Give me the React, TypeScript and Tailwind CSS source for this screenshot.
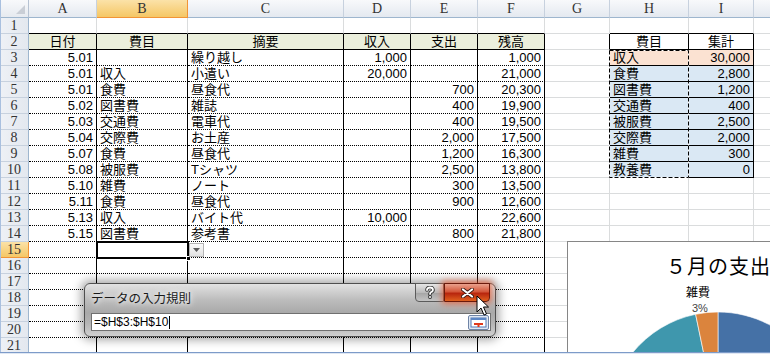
import React from "react";

const COLS = ["A", "B", "C", "D", "E", "F", "G", "H", "I", ""];

const DATA: Record<number, string[]> = {
  2: ["日付", "費目", "摘要", "収入", "支出", "残高", "", "費目", "集計"],
  3: ["5.01", "", "繰り越し", "1,000", "", "1,000", "", "収入", "30,000"],
  4: ["5.01", "収入", "小遣い", "20,000", "", "21,000", "", "食費", "2,800"],
  5: ["5.01", "食費", "昼食代", "", "700", "20,300", "", "図書費", "1,200"],
  6: ["5.02", "図書費", "雑誌", "", "400", "19,900", "", "交通費", "400"],
  7: ["5.03", "交通費", "電車代", "", "400", "19,500", "", "被服費", "2,500"],
  8: ["5.04", "交際費", "お土産", "", "2,000", "17,500", "", "交際費", "2,000"],
  9: ["5.07", "食費", "昼食代", "", "1,200", "16,300", "", "雑費", "300"],
  10: ["5.08", "被服費", "Tシャツ", "", "2,500", "13,800", "", "教養費", "0"],
  11: ["5.10", "雑費", "ノート", "", "300", "13,500"],
  12: ["5.11", "食費", "昼食代", "", "900", "12,600"],
  13: ["5.13", "収入", "バイト代", "10,000", "", "22,600"],
  14: ["5.15", "図書費", "参考書", "", "800", "21,800"],
};

function cellClass(r: number, c: number): string {
  const parts: string[] = [
    "flex items-end px-[3px] overflow-hidden whitespace-nowrap border-r border-b leading-[15px]",
  ];
  const blackRight =
    (c <= 5 && r >= 2) || (c >= 6 && c <= 8 && r >= 2 && r <= 10);
  parts.push(blackRight ? "border-r-black" : "border-r-[#dadcdd]");
  if (c <= 5 && (r === 1 || r === 2)) parts.push("border-b-black");
  else if (c <= 5 && r >= 3) parts.push("border-b-black [border-bottom-style:dotted]");
  else if ((c === 7 || c === 8) && r >= 1 && r <= 10) parts.push("border-b-black");
  else parts.push("border-b-[#dadcdd]");

  if (r === 2 && c <= 5) parts.push("bg-[#ebefdc]");
  else if (r === 3 && (c === 7 || c === 8)) parts.push("bg-[#fbe2d2]");
  else if (r >= 4 && r <= 10 && (c === 7 || c === 8)) parts.push("bg-[#dae8f4]");
  else parts.push("bg-white");

  if (r === 2) parts.push("justify-center");
  else if (c === 0 || c === 3 || c === 4 || c === 5 || c === 8) parts.push("justify-end");
  return parts.join(" ");
}

function Pie() {
  const cx = 150;
  const cy = 180;
  const r = 110;
  const vals = [2800, 1200, 400, 2500, 2000, 300];
  const colors = ["#4571a6", "#aa4643", "#89a54e", "#71588f", "#3f97ad", "#db843d"];
  const total = vals.reduce((a, b) => a + b, 0);
  let acc = 0;
  const pt = (deg: number) => {
    const rad = (deg * Math.PI) / 180;
    return [cx + r * Math.sin(rad), cy - r * Math.cos(rad)];
  };
  return (
    <svg className="absolute left-0 top-0" width="260" height="150">
      {vals.map((v, i) => {
        const a0 = (acc / total) * 360;
        acc += v;
        const a1 = (acc / total) * 360;
        const [x0, y0] = pt(a0);
        const [x1, y1] = pt(a1);
        const large = a1 - a0 > 180 ? 1 : 0;
        return (
          <path
            key={i}
            d={`M${cx},${cy} L${x0},${y0} A${r},${r} 0 ${large} 1 ${x1},${y1} Z`}
            fill={colors[i]}
            stroke="#ffffff"
            strokeWidth={0.6}
          />
        );
      })}
    </svg>
  );
}

const HEAD =
  "flex items-center justify-center border-r border-b font-['Liberation_Serif',serif] text-[14px] text-[#333]";

export default function App() {
  const rows = Array.from({ length: 21 }, (_, i) => i + 1);
  return (
    <div className="relative w-[770px] h-[354px] overflow-hidden bg-white font-['Liberation_Sans','Noto_Sans_CJK_JP',sans-serif] text-[13px] text-black">
      <div className="grid grid-cols-[29px_68px_91px_156px_67px_67px_67px_65px_79px_65px_60px] grid-rows-[18px_repeat(21,16px)] w-[814px]">
        <div className="flex items-end justify-end p-[3px] border-r border-b border-r-[#b6c2d2] border-b-[#9eb6ce] bg-[linear-gradient(180deg,#f8f9fb,#e6eaf0)]">
          <svg width="9" height="9" viewBox="0 0 9 9">
            <path d="M9,0 L9,9 L0,9 Z" fill="#c9ced6" />
          </svg>
        </div>
        {COLS.map((l, i) => (
          <div
            key={i}
            className={
              i === 1
                ? `${HEAD} border-r-[#f29436] border-b-[#f29436] bg-[linear-gradient(180deg,#fbe2a8,#f5c765)]`
                : `${HEAD} border-r-[#c7d1de] border-b-[#9eb6ce] bg-[linear-gradient(180deg,#f8f9fb,#e4e9f0)]`
            }
          >
            {l}
          </div>
        ))}
        {rows.map((r) => (
          <React.Fragment key={r}>
            <div
              className={
                r === 15
                  ? `${HEAD} border-r-[#f29436] border-b-[#f29436] bg-[linear-gradient(180deg,#fbe2a8,#f5c765)]`
                  : `${HEAD} border-r-[#9eb6ce] border-b-[#c7d1de] bg-[linear-gradient(90deg,#eef1f6,#e3e8ef)]`
              }
            >
              {r}
            </div>
            {COLS.map((_, c) => (
              <div key={c} className={cellClass(r, c)}>
                {DATA[r]?.[c] ?? ""}
              </div>
            ))}
          </React.Fragment>
        ))}
      </div>

      {/* copy marquee around H3:H10 */}
      <svg className="absolute left-0 top-0 pointer-events-none" width="770" height="354">
        <rect x="609.5" y="50.5" width="79" height="127" fill="none" stroke="#ffffff" strokeWidth="1" />
        <rect x="609.5" y="50.5" width="79" height="127" fill="none" stroke="#000000" strokeWidth="1" strokeDasharray="4 2" />
      </svg>

      {/* active cell B15 with fill handle and validation dropdown */}
      <div className="absolute left-[96px] top-[241px] w-[93px] h-[18px] border-2 border-black" />
      <div className="absolute left-[186px] top-[256px] w-[5px] h-[5px] bg-black border border-white" />
      <div className="absolute left-[189px] top-[243px] w-[15px] h-[14px] border border-[#b5b5b5] bg-[linear-gradient(180deg,#fafafa,#e2e2e2)] flex items-center justify-center">
        <svg width="7" height="4" viewBox="0 0 7 4">
          <path d="M0,0 L7,0 L3.5,4 Z" fill="#5a5a5a" />
        </svg>
      </div>

      {/* chart object */}
      <div className="absolute left-[567px] top-[241px] w-[260px] h-[150px] border border-[#868686] bg-white">
        <Pie />
        <div className="relative flex flex-col items-start">
          <div className="pl-[98px] pt-[9px] text-[20px] leading-[30px] tracking-[1px] font-['Noto_Sans_CJK_JP',sans-serif] text-black whitespace-nowrap">
            ５月の支出
          </div>
          <div className="pl-[118px] pt-[3px] text-[12px] leading-[16px] font-['Noto_Sans_CJK_JP',sans-serif]">
            雑費
          </div>
          <div className="pl-[124px] pt-[1px] text-[11px] leading-[14px] text-[#444]">3%</div>
        </div>
      </div>

      {/* dialog window */}
      <div className="absolute left-[84px] top-[283px] w-[412px] h-[54px] rounded-[6px] border border-[#4f4f4f] shadow-[0_0_10px_3px_rgba(0,0,0,0.35)] bg-[linear-gradient(180deg,#e2e2e2_0%,#bdbdbd_30%,#a9a9a9_55%,#b4b4b4_75%,#cfcfcf_100%)] flex flex-col px-[5px]">
        <div className="flex items-start justify-between h-[29px]">
          <div className="pt-[5px] pl-[1px] text-[12.5px] leading-[18px] text-[#1a1a1a] font-['Noto_Sans_CJK_JP',sans-serif] [text-shadow:0_0_5px_#ffffff,0_0_8px_#ffffff]">
            データの入力規則
          </div>
          <div className="flex mt-[-1px]">
            <div className="w-[29px] h-[19px] border border-[#5b5b5b] rounded-bl-[4px] bg-[linear-gradient(180deg,#e6e6e6,#bababa_50%,#a4a4a4_51%,#c4c4c4)] flex items-center justify-center">
              <svg width="10" height="13" viewBox="0 0 10 13">
                <path d="M2,4 Q2,1.5 5,1.5 Q8,1.5 8,4 Q8,5.5 5.5,6.5 L5,8" fill="none" stroke="#333" strokeWidth="3.6" strokeLinecap="round" />
                <circle cx="5" cy="11" r="1.9" fill="#333" />
                <path d="M2,4 Q2,1.5 5,1.5 Q8,1.5 8,4 Q8,5.5 5.5,6.5 L5,8" fill="none" stroke="#ffffff" strokeWidth="1.8" strokeLinecap="round" />
                <circle cx="5" cy="11" r="1" fill="#ffffff" />
              </svg>
            </div>
            <div className="w-[46px] h-[19px] border border-[#6b1a0c] rounded-br-[4px] bg-[linear-gradient(180deg,#eaa08c,#d4573a_45%,#b8260e_55%,#e0601e)] shadow-[0_0_6px_2px_rgba(235,90,50,0.75)] flex items-center justify-center">
              <svg width="13" height="10" viewBox="0 0 13 10">
                <path d="M2,1.5 L11,8.5 M11,1.5 L2,8.5" stroke="#3a1a12" strokeWidth="3.8" strokeLinecap="round" />
                <path d="M2,1.5 L11,8.5 M11,1.5 L2,8.5" stroke="#ffffff" strokeWidth="2.2" strokeLinecap="round" />
              </svg>
            </div>
          </div>
        </div>
        <div className="ml-[1px] w-[400px] h-[18px] bg-white border border-[#707070] flex items-center justify-between pl-[2px] pr-[1px]">
          <div className="text-[12px] leading-[16px] text-black flex items-center">
            =$H$3:$H$10<span className="inline-block w-[1px] h-[13px] bg-black ml-[1px]" />
          </div>
          <svg width="21" height="15" viewBox="0 0 21 15">
            <rect x="0.5" y="0.5" width="20" height="14" rx="1.5" fill="#dfe8f4" stroke="#6f84a6" />
            <rect x="3" y="3" width="15" height="9" fill="#ffffff" stroke="#5579b3" />
            <rect x="3" y="3" width="15" height="2" fill="#5b86c5" />
            <rect x="6" y="8" width="9" height="2" fill="#e03a1c" />
            <rect x="9.5" y="8" width="2" height="4" fill="#e03a1c" />
          </svg>
        </div>
      </div>

      {/* mouse cursor */}
      <svg className="absolute left-[476px] top-[295px]" width="14" height="22" viewBox="0 0 14 22">
        <path d="M1,1 L1,17 L5,13 L8,20 L10.5,19 L7.5,12 L12.5,12 Z" fill="#ffffff" stroke="#000000" strokeWidth="1" strokeLinejoin="round" />
      </svg>

      {/* screenshot frame */}
      <div className="absolute left-0 top-0 w-[1px] h-[354px] bg-[#a9c0df]" />
      <div className="absolute left-0 bottom-[1px] w-[770px] h-[1px] bg-[#7d9bc9]" />
      <div className="absolute left-0 bottom-0 w-[770px] h-[1px] bg-[#dfe7f3]" />
    </div>
  );
}
